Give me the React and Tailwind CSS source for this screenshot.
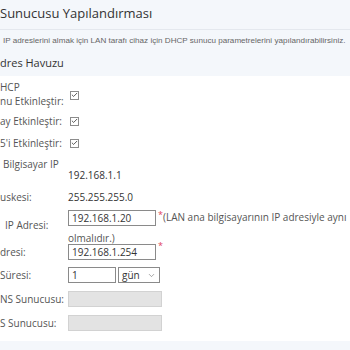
import { Check, ChevronDown } from 'lucide-react'

const font = { fontFamily: '"Open Sans", "Noto Sans", sans-serif' }

function Box() {
  return (
    <span className="ml-[2px] flex h-[9px] w-[9px] items-center justify-center border border-[#8c8c8c] bg-white">
      <Check size={8} strokeWidth={3} className="text-[#444]" />
    </span>
  )
}

function Label({ children, className = '' }) {
  return <div className={`w-[68px] shrink-0 text-[10px] leading-[14px] text-[#555] ${className}`}>{children}</div>
}

function Field({ value, className = 'w-[88px]' }) {
  return (
    <div className={`flex h-[16px] items-center border border-[#8a8a8a] bg-white px-[3px] text-[10px] text-[#333] ${className}`}>
      {value}
    </div>
  )
}

function Star() {
  return <span className="ml-[2px] self-start text-[9px] leading-[10px] text-[#e0435a]">*</span>
}

export default function App() {
  return (
    <div className="h-[350px] w-[350px] overflow-hidden bg-[#f4f7fb]" style={font}>
      <div className="w-[400px]">
        {/* Header */}
        <div className="h-[30px] border-b border-[#e4e8ee] pt-[3px]">
          <h1 className="text-[13px] leading-[20px] text-[#333]">Sunucusu Yapılandırması</h1>
        </div>
        <p className="pl-[3px] pt-[5px] text-[8.1px] leading-[12px] text-[#666]" style={{ fontFamily: '"Liberation Sans", Arial, sans-serif' }}>
          IP adreslerini almak için LAN tarafı cihaz için DHCP sunucu parametrelerini yapılandırabilirsiniz.
        </p>
        <h2 className="pt-[8px] text-[11px] leading-[16px] text-[#333]">dres Havuzu</h2>

        {/* Form */}
        <div className="mt-[5px] bg-white pb-[6px] pt-[4px]">
          <div className="flex h-[30px] items-center">
            <Label className="self-start">HCP<br />nu Etkinleştir:</Label>
            <Box />
          </div>
          <div className="flex h-[22px] items-center">
            <Label>ay Etkinleştir:</Label>
            <Box />
          </div>
          <div className="flex h-[22px] items-center">
            <Label>5'i Etkinleştir:</Label>
            <Box />
          </div>
          <div className="flex h-[32px]">
            <Label className="pl-[3px] pt-[3px] text-[10.5px]">Bilgisayar IP</Label>
            <div className="pt-[14px] text-[10px] leading-[14px] text-[#333]">192.168.1.1</div>
          </div>
          <div className="flex h-[22px] items-center">
            <Label>uskesi:</Label>
            <div className="text-[10px] leading-[14px] text-[#333]">255.255.255.0</div>
          </div>
          <div className="flex h-[33px] items-center">
            <Label className="pl-[5px]">IP Adresi:</Label>
            <div className="flex flex-col self-start pt-[2px]">
              <div className="flex items-start">
                <Field value="192.168.1.20" />
                <Star />
                <span className="whitespace-nowrap text-[10px] leading-[14px] text-[#555]">(LAN ana bilgisayarının IP adresiyle aynı</span>
              </div>
              <div className="mt-[5px] text-[10px] leading-[14px] text-[#555]">olmalıdır.)</div>
            </div>
          </div>
          <div className="flex h-[22px] items-center">
            <Label>dresi:</Label>
            <Field value="192.168.1.254" />
            <Star />
          </div>
          <div className="flex h-[24px] items-center">
            <Label>Süresi:</Label>
            <Field value="1" className="w-[48px]" />
            <div className="ml-[2px] flex h-[16px] w-[42px] items-center justify-between border border-[#8a8a8a] bg-white px-[3px] text-[10px] text-[#333]">
              <span>gün</span>
              <ChevronDown size={9} strokeWidth={1.5} className="text-[#666]" />
            </div>
          </div>
          <div className="flex h-[24px] items-center">
            <Label>NS Sunucusu:</Label>
            <div className="h-[16px] w-[94px] border border-[#d2d2d2] bg-[#e3e3e3]" />
          </div>
          <div className="flex h-[24px] items-center">
            <Label>S Sunucusu:</Label>
            <div className="h-[16px] w-[94px] border border-[#d2d2d2] bg-[#e3e3e3]" />
          </div>
        </div>
      </div>
    </div>
  )
}
